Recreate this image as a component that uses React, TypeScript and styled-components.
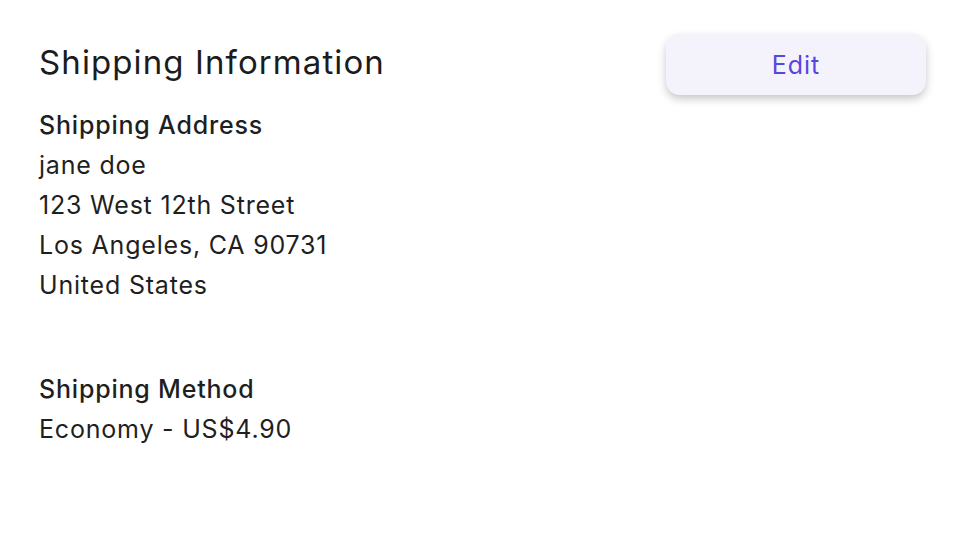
import React from "react";
import styled, { createGlobalStyle } from "styled-components";

const GlobalStyle = createGlobalStyle`
  html, body {
    margin: 0;
    padding: 0;
    background: #ffffff;
  }
  body {
    font-family: Inter, "Noto Sans", sans-serif;
    color: #1f1f1f;
  }
`;

const Page = styled.div`
  width: 966px;
  height: 544px;
  box-sizing: border-box;
  padding: 34px 40px 0 39px;
  display: flex;
  flex-direction: column;
`;

const Header = styled.div`
  display: flex;
  justify-content: space-between;
  align-items: flex-start;
`;

const Title = styled.h2`
  margin: 8px 0 0;
  font-size: 33px;
  font-weight: 400;
  line-height: 40px;
  letter-spacing: 1.1px;
  color: #1c1c1c;
`;

const EditButton = styled.button`
  width: 260px;
  height: 61px;
  border: none;
  border-radius: 14px;
  background: #f4f3fc;
  color: #5846e0;
  font-family: Inter, "Noto Sans", sans-serif;
  font-size: 25px;
  letter-spacing: 1px;
  box-shadow: 0 4px 8px rgba(0, 0, 0, 0.22);
  cursor: pointer;
`;

const Section = styled.div<{ $gap: number }>`
  display: flex;
  flex-direction: column;
  margin-top: ${({ $gap }) => $gap}px;
`;

const Line = styled.div<{ $label?: boolean }>`
  font-size: 25px;
  line-height: 40px;
  letter-spacing: 0.8px;
  font-weight: ${({ $label }) => ($label ? 500 : 400)};
  color: #1f1f1f;
`;

const address = [
  "jane doe",
  "123 West 12th Street",
  "Los Angeles, CA 90731",
  "United States",
];

export default function App() {
  return (
    <>
      <GlobalStyle />
      <Page>
        <Header>
          <Title>Shipping Information</Title>
          <EditButton>Edit</EditButton>
        </Header>
        <Section $gap={10}>
          <Line $label>Shipping Address</Line>
          {address.map((l) => (
            <Line key={l}>{l}</Line>
          ))}
        </Section>
        <Section $gap={64}>
          <Line $label>Shipping Method</Line>
          <Line>Economy - US$4.90</Line>
        </Section>
      </Page>
    </>
  );
}
